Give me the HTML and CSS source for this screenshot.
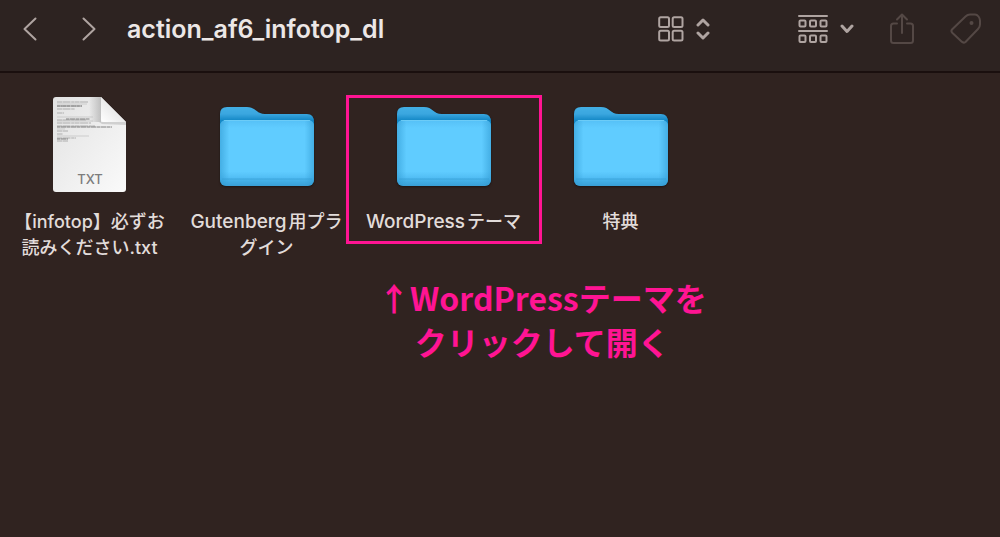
FILE: index.html
```html
<!DOCTYPE html>
<html lang="ja">
<head>
<meta charset="utf-8">
<title>action_af6_infotop_dl</title>
<link rel="stylesheet" href="styles.css">
</head>
<body>
<svg class="defs" aria-hidden="true">
  <defs>
    <linearGradient id="folder-back" x1="0" y1="0" x2="0" y2="1">
      <stop offset="0" stop-color="#43afe5"/>
      <stop offset=".18" stop-color="#3aa6df"/>
      <stop offset=".34" stop-color="#1488c6"/>
      <stop offset="1" stop-color="#1488c6"/>
    </linearGradient>
    <linearGradient id="folder-front" x1="0" y1="0" x2="0" y2="1">
      <stop offset="0" stop-color="#55c0f6"/>
      <stop offset=".12" stop-color="#60ccff"/>
      <stop offset=".78" stop-color="#60ccff"/>
      <stop offset=".88" stop-color="#51bdf4"/>
      <stop offset=".92" stop-color="#43afe6"/>
      <stop offset="1" stop-color="#399fd6"/>
    </linearGradient>
    <linearGradient id="folder-sides">
      <stop offset="0" stop-color="#319bd3" stop-opacity=".6"/>
      <stop offset=".1" stop-color="#319bd3" stop-opacity="0"/>
      <stop offset=".9" stop-color="#319bd3" stop-opacity="0"/>
      <stop offset="1" stop-color="#319bd3" stop-opacity=".6"/>
    </linearGradient>
    <linearGradient id="paper" x1="0" y1="0" x2="1" y2="1">
      <stop offset="0" stop-color="#e2e2e2"/>
      <stop offset="1" stop-color="#fafafa"/>
    </linearGradient>
    <linearGradient id="curl" x1="0" y1="1" x2=".7" y2=".3">
      <stop offset="0" stop-color="#ffffff"/>
      <stop offset="1" stop-color="#e2e2e2"/>
    </linearGradient>
    <linearGradient id="curl-shade">
      <stop offset="0" stop-color="#888" stop-opacity="0"/>
      <stop offset="1" stop-color="#888" stop-opacity=".45"/>
    </linearGradient>
    <symbol id="folder" viewBox="0 0 96 82">
      <path fill="url(#folder-back)" d="M1 20V8Q1 1 8 1H28C37 1 37 8 46 8H88Q95 8 95 16V40H1Z"/>
      <rect x="1" y="14" width="94" height="66" rx="6" fill="url(#folder-front)"/>
      <rect x="1" y="14" width="94" height="66" rx="6" fill="url(#folder-sides)"/>
      <path d="M5 14.500H91" stroke="#72cff8" stroke-width=".8"/>
      <path d="M3 73H93" stroke="#329bd2" stroke-width=".6"/>
    </symbol>
  </defs>
</svg>

<header class="toolbar">
  <nav class="history">
    <button class="tool" aria-label="戻る"><svg width="14" height="24" viewBox="0 0 14 24"><path d="M12.500 1.500 1.500 12 12.500 22.500"/></svg></button>
    <button class="tool" aria-label="進む"><svg width="14" height="24" viewBox="0 0 14 24"><path d="M1.500 1.500 12.500 12 1.500 22.500"/></svg></button>
  </nav>
  <h1 class="title">action_af6_infotop_dl</h1>
  <button class="tool view" aria-label="表示">
    <svg width="26" height="26" viewBox="0 0 26 26"><rect x="1.200" y="1.200" width="9.800" height="9.800" rx="1.500"/><rect x="14.700" y="1.200" width="9.800" height="9.800" rx="1.500"/><rect x="1.200" y="14.700" width="9.800" height="9.800" rx="1.500"/><rect x="14.700" y="14.700" width="9.800" height="9.800" rx="1.500"/></svg>
    <svg class="bold" width="14" height="24" viewBox="0 0 14 24"><path d="M2 8 7 3 12 8M2 16 7 21 12 16"/></svg>
  </button>
  <button class="tool group" aria-label="グループ">
    <svg width="30" height="30" viewBox="0 0 30 30"><path d="M1 2H29M1 17H29"/><rect x="1.500" y="6.500" width="6" height="6" rx="1"/><rect x="12" y="6.500" width="6" height="6" rx="1"/><rect x="22.500" y="6.500" width="6" height="6" rx="1"/><rect x="1.500" y="21.500" width="6" height="6.500" rx="1"/><rect x="12" y="21.500" width="6" height="6.500" rx="1"/><rect x="22.500" y="21.500" width="6" height="6.500" rx="1"/></svg>
    <svg class="bold" width="14" height="10" viewBox="0 0 14 10"><path d="M2 2 7 7.500 12 2"/></svg>
  </button>
  <button class="tool share" aria-label="共有" disabled><svg width="26" height="32" viewBox="0 0 26 32"><path d="M8 10.500H4.500Q2 10.500 2 13V27.500Q2 30 4.500 30H21.500Q24 30 24 27.500V13Q24 10.500 21.500 10.500H18M13 20V2M8 6.500 13 1.500 18 6.500"/></svg></button>
  <button class="tool tag" aria-label="タグ" disabled><svg width="32" height="32" viewBox="0 0 32 32"><path d="M2 16.500 15.500 3.500Q17.500 1.500 20 1.500H25Q27 1.500 28.500 3.500Q30 5.500 30 7.500V11.500Q30 14 28 16L15.500 29Q13.500 30.500 11.500 28.500L2.500 20Q.5 18 2 16.500Z"/><circle class="dot" cx="21.500" cy="10" r="2"/></svg></button>
</header>

<main class="files">
  <figure class="item">
    <svg class="icon" width="96" height="100" viewBox="0 0 96 100" role="img" aria-label="TXT">
      <path fill="url(#paper)" d="M14 2H59L84 27V94Q84 97 81 97H14Q11 97 11 94V5Q11 2 14 2Z"/>
      <path d="M47 2H59V27H47Z" fill="url(#curl-shade)"/>
      <path d="M57 27H84V30L60 29Z" fill="#888" opacity=".3"/>
      <path fill="url(#curl)" d="M59 2 84 27H62Q59 27 59 24Z"/>
      <g fill="none" stroke="#888" stroke-width=".6">
        <path stroke-dasharray="5 .5 8 .7 3 .4" d="M15 7H46M15 11H40M15 14H33M15 18H22M15 25H44M15 28H49M15 31H53M15 36H26M15 39H21M15 43H34M15 46H26"/>
        <path stroke="#bbb" d="M15 9H45M15 22H51M15 26H51M15 34H23M15 41H47"/>
        <path stroke="#666" stroke-width=".8" stroke-dasharray="3 .5 6 .5" d="M15 11H40M24 24H48M15 32H70M15 44H26"/>
      </g>
      <text class="kind" x="48" y="89" text-anchor="middle">TXT</text>
    </svg>
    <figcaption class="name">【infotop】必ずお<br>読みください.txt</figcaption>
  </figure>
  <figure class="item">
    <svg class="icon folder" width="96" height="100"><use href="#folder" y="11" width="96" height="82"/></svg>
    <figcaption class="name"><span class="latin">Gutenberg</span>用プラ<br>グイン</figcaption>
  </figure>
  <figure class="item marked">
    <svg class="icon folder" width="96" height="100"><use href="#folder" y="11" width="96" height="82"/></svg>
    <figcaption class="name"><span class="latin">WordPress</span>テーマ</figcaption>
  </figure>
  <figure class="item">
    <svg class="icon folder" width="96" height="100"><use href="#folder" y="11" width="96" height="82"/></svg>
    <figcaption class="name">特典</figcaption>
  </figure>
</main>
<p class="note">↑WordPressテーマを<br>クリックして開く</p>
</body>
</html>
```

FILE: styles.css
```css
* { box-sizing: border-box; }
body {
  margin: 0;
  min-height: 100vh;
  background: #302320;
  color: #e2dcda;
  font-family: Inter, "Noto Sans CJK JP", sans-serif;
}
.defs { position: absolute; width: 0; height: 0; }
.toolbar {
  display: flex;
  align-items: center;
  height: 73px;
  padding: 0 18px 13px 23px;
  background: #2d2321;
  border-bottom: 2px solid #1a0f0e;
}
.history { display: flex; gap: 45px; }
.tool {
  display: flex;
  align-items: center;
  flex: none;
  padding: 0;
  border: 0;
  background: none;
  color: #afa4a1;
}
.tool svg {
  fill: none;
  stroke: currentColor;
  stroke-width: 2;
  stroke-linecap: round;
  stroke-linejoin: round;
}
.tool .bold { stroke-width: 3; }
.tool .dot { fill: currentColor; stroke: none; }
.tool:disabled { color: #544845; }
.title {
  flex: 1;
  margin: 0 0 0 31px;
  color: #ece7e6;
  font-size: 25px;
  line-height: 32px;
  font-weight: 600;
}
.view { gap: 12px; }
.group { gap: 12px; margin-left: 88px; }
.share { margin-left: 35px; }
.tag { margin-left: 35px; }
.files {
  display: grid;
  grid-template-columns: repeat(auto-fill, 177px);
  padding: 22px 0 0 1px;
}
.item {
  position: relative;
  display: flex;
  flex-direction: column;
  align-items: center;
  margin: 0;
}
.folder { filter: drop-shadow(0 1px 1px #1a1413); }
.kind {
  fill: #7d7d7d;
  font-size: 13px;
  font-weight: 500;
}
.name {
  margin-top: 14px;
  font-size: 18px;
  line-height: 26px;
  font-weight: 500;
  text-align: center;
  white-space: nowrap;
}
.latin {
  margin-right: 2px;
  font-size: 19px;
}
.marked::after {
  content: "";
  position: absolute;
  inset: 0 -10px 17px -9px;
  border: 3px solid #ff1493;
}
.note {
  width: max-content;
  margin: 14px 0 0 378px;
  color: #ff1493;
  font-family: "Noto Sans CJK JP", sans-serif;
  font-size: 32px;
  line-height: 44px;
  font-weight: 700;
  text-align: center;
}
```
